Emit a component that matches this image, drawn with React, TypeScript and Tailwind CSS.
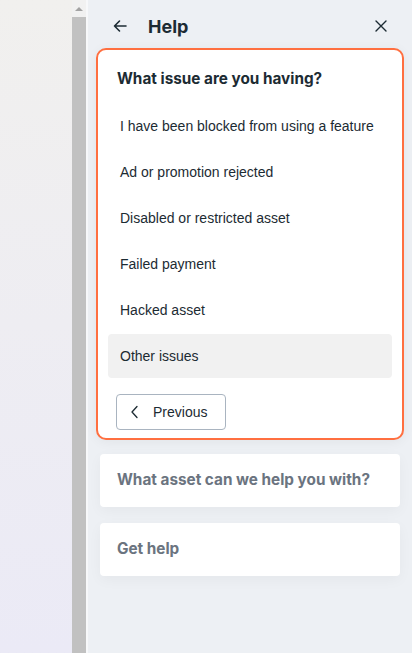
import React from "react";

const options = [
  "I have been blocked from using a feature",
  "Ad or promotion rejected",
  "Disabled or restricted asset",
  "Failed payment",
  "Hacked asset",
  "Other issues",
];

export default function App() {
  return (
    <div className="flex h-[653px] w-[412px] overflow-hidden" style={{ fontFamily: "'Liberation Sans', Arial, sans-serif" }}>
      <div className="w-[72px] h-full bg-gradient-to-b from-[#f1f0ee] to-[#ebeaf6]" />
      <div className="w-[14px] h-full bg-[#f1f1f1] flex flex-col">
        <div className="h-[17px] flex items-center justify-center">
          <div className="w-0 h-0 border-l-[4px] border-r-[4px] border-b-[4px] border-l-transparent border-r-transparent border-b-[#a3a3a3]" />
        </div>
        <div className="flex-1 bg-[#c1c1c1]" />
      </div>
      <div className="w-[2px] h-full bg-[#f7f8fa]" />
      <div className="flex-1 h-full bg-[#edf0f4] flex flex-col">
        <div className="h-[48px] pt-[4px] flex items-center pl-[24px] pr-[24px] shrink-0">
          <svg width="16" height="16" viewBox="0 0 16 16" fill="none" stroke="#1c2b33" strokeWidth="1.6" strokeLinecap="round" strokeLinejoin="round">
            <path d="M14 8H2.5M7.5 3 2.5 8l5 5" />
          </svg>
          <span className="ml-[20px] text-[18px] font-bold text-[#1c2b33]" style={{ fontFamily: "Inter, sans-serif" }}>Help</span>
          <svg className="ml-auto" width="14" height="14" viewBox="0 0 14 14" fill="none" stroke="#1c2b33" strokeWidth="1.4" strokeLinecap="round">
            <path d="M2 2l10 10M12 2 2 12" />
          </svg>
        </div>
        <div className="mx-[8px] rounded-[10px] border-2 border-[#ff6f40] bg-white flex flex-col pt-[17px] pb-[8px] shadow-[0_2px_12px_rgba(0,0,0,0.05)]">
          <div className="px-[19px] text-[15.3px] leading-[24px] font-bold text-[#1c2b33]" style={{ fontFamily: "Inter, sans-serif" }}>What issue are you having?</div>
          <div className="mt-[13px] px-[10px] flex flex-col gap-[2px]">
            {options.map((o, i) => (
              <div key={o} className={`h-[44px] flex items-center px-[12px] rounded-[4px] text-[14px] whitespace-nowrap text-[#1c2b33] ${i === options.length - 1 ? "bg-[#f1f1f1]" : ""}`}>{o}</div>
            ))}
          </div>
          <div className="mt-[16px] px-[18px]">
            <button className="h-[36px] w-[110px] border border-[#a9b4c0] rounded-[4px] flex items-center pl-[13px] text-[14px] text-[#1c2b33]">
              <svg width="10" height="14" viewBox="0 0 10 14" fill="none" stroke="#1c2b33" strokeWidth="1.3" strokeLinecap="round" strokeLinejoin="round">
                <path d="M7 1.5 2 7l5 5.5" />
              </svg>
              <span className="ml-[13px]">Previous</span>
            </button>
          </div>
        </div>
        <div className="mx-[12px] mt-[14px] h-[53px] bg-white rounded-[4px] flex items-center px-[17px] text-[15.3px] font-bold text-[#6b7480] shadow-[0_4px_14px_rgba(0,0,0,0.04)]" style={{ fontFamily: "Inter, sans-serif" }}>What asset can we help you with?</div>
        <div className="mx-[12px] mt-[16px] h-[53px] bg-white rounded-[4px] flex items-center px-[17px] text-[15.3px] font-bold text-[#6b7480] shadow-[0_4px_14px_rgba(0,0,0,0.04)]" style={{ fontFamily: "Inter, sans-serif" }}>Get help</div>
      </div>
    </div>
  );
}
